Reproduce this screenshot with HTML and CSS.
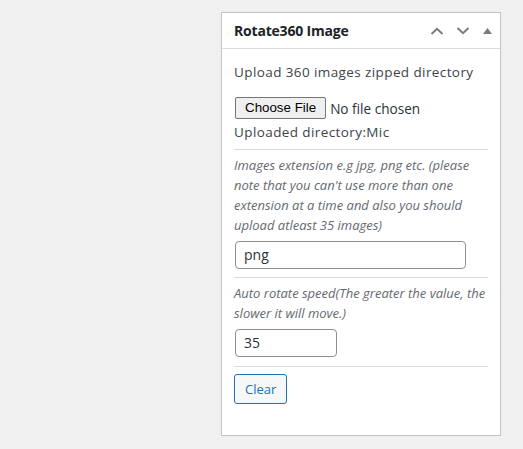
FILE: index.html
```html
<!DOCTYPE html>
<html>
<head>
<meta charset="utf-8">
<link rel="stylesheet" href="styles.css">
</head>
<body>
<div class="page">
  <div class="postbox">
    <div class="postbox-header">
      <h2 class="hndle">Rotate360 Image</h2>
      <div class="handle-actions">
        <span class="hbtn"><svg width="14" height="8" viewBox="0 0 14 8"><path d="M1.5 7 L7 1.8 L12.5 7" fill="none" stroke="#787c82" stroke-width="2"/></svg></span>
        <span class="hbtn"><svg width="14" height="8" viewBox="0 0 14 8"><path d="M1.5 1 L7 6.2 L12.5 1" fill="none" stroke="#787c82" stroke-width="2"/></svg></span>
        <span class="hbtn small"><svg width="9" height="6" viewBox="0 0 9 6"><path d="M0 6 L4.5 0 L9 6 Z" fill="#787c82"/></svg></span>
      </div>
    </div>
    <div class="inside">
      <p class="label">Upload 360 images zipped directory</p>
      <div class="file-row">
        <span class="file-btn">Choose File</span>
        <span class="file-text">No file chosen</span>
      </div>
      <p class="uploaded">Uploaded directory:Mic</p>
      <hr class="sep">
      <p class="desc">Images extension e.g jpg, png etc. (please note that you can't use more than one extension at a time and also you should upload atleast 35 images)</p>
      <div class="field wide">png</div>
      <hr class="sep sep2">
      <p class="desc">Auto rotate speed(The greater the value, the slower it will move.)</p>
      <div class="field narrow">35</div>
      <hr class="sep sep3">
      <span class="clear-btn">Clear</span>
    </div>
  </div>
</div>
</body>
</html>
```

FILE: styles.css
```css
html, body {
  margin: 0;
  padding: 0;
  background: #f0f0f1;
}
body {
  font-family: "Open Sans", "Noto Sans", sans-serif;
  color: #3c434a;
  font-size: 13px;
}
.page {
  padding: 12px 0 0 221px;
}
.postbox {
  width: 278px;
  background: #fff;
  border: 1px solid #c3c4c7;
  box-shadow: 0 1px 1px rgba(0,0,0,0.04);
}
.postbox-header {
  height: 35px;
  border-bottom: 1px solid #dcdcde;
  display: flex;
  align-items: center;
  justify-content: space-between;
}
.hndle {
  margin: 0;
  padding: 0 12px;
  font-size: 14px;
  font-weight: 700;
  color: #1d2327;
  line-height: 1.4;
  letter-spacing: -0.2px;
}
.handle-actions {
  display: flex;
  align-items: center;
  padding-right: 2px;
}
.hbtn {
  width: 26px;
  height: 35px;
  display: flex;
  align-items: center;
  justify-content: center;
}
.hbtn.small {
  width: 22px;
}
.inside {
  padding: 0 12px 31px 12px;
}
.label {
  margin: 13px 0 0;
  line-height: 20px;
  font-size: 13.5px;
  letter-spacing: 0.4px;
}
.file-row {
  margin-top: 15px;
  display: flex;
  align-items: center;
}
.file-btn {
  font-family: "Liberation Sans", Arial, sans-serif;
  font-size: 13.33px;
  color: #000;
  background: #efefef;
  border: 1px solid #767676;
  border-radius: 2px;
  height: 20px;
  line-height: 20px;
  padding: 0 9px;
  margin-left: 1px;
}
.file-text {
  font-size: 13.6px;
  margin-left: 4px;
  color: #2c3338;
}
.uploaded {
  margin: 3px 0 0;
  line-height: 20px;
  font-size: 13.5px;
  letter-spacing: 0.4px;
}
.sep {
  margin: 7px 0 0;
  border: 0;
  border-top: 1px solid #dcdcde;
  height: 0;
}
.sep2 { margin-top: 8px; }
.sep3 { margin-top: 9px; }
.desc {
  margin: 5px 0 0;
  font-style: italic;
  color: #646970;
  line-height: 20px;
}
.field {
  margin-top: 6px;
  margin-left: 1px;
  height: 28px;
  box-sizing: border-box;
  border: 1px solid #8c8f94;
  border-radius: 4px;
  padding: 0 8px;
  line-height: 26px;
  font-size: 14px;
  color: #2c3338;
}
.wide { width: 231px; }
.narrow { width: 102px; }
.clear-btn {
  display: inline-block;
  margin-top: 7px;
  box-sizing: border-box;
  height: 30px;
  line-height: 28px;
  padding: 0 10px;
  border: 1px solid #2271b1;
  border-radius: 3px;
  background: #f6f7f7;
  color: #2271b1;
  font-size: 13px;
}
```
